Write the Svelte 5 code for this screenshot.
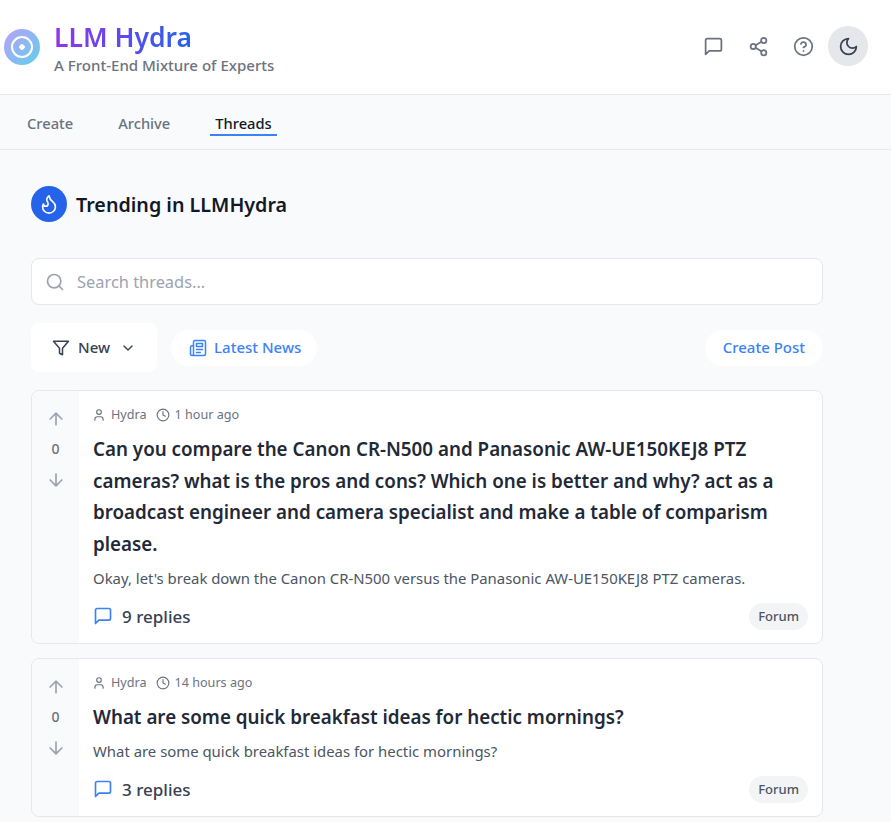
<script>
	const threads = [
		{
			votes: 0,
			author: 'Hydra',
			time: '1 hour ago',
			title: 'Can you compare the Canon CR-N500 and Panasonic AW-UE150KEJ8 PTZ cameras? what is the pros and cons? Which one is better and why? act as a broadcast engineer and camera specialist and make a table of comparism please.',
			excerpt: "Okay, let's break down the Canon CR-N500 versus the Panasonic AW-UE150KEJ8 PTZ cameras.",
			replies: 9
		},
		{
			votes: 0,
			author: 'Hydra',
			time: '14 hours ago',
			title: 'What are some quick breakfast ideas for hectic mornings?',
			excerpt: 'What are some quick breakfast ideas for hectic mornings?',
			replies: 3
		}
	];
</script>

<header class="top">
	<div class="brand">
		<div class="logo"><span class="logo-dot"></span></div>
		<div>
			<h1>LLM Hydra</h1>
			<p class="tagline">A Front-End Mixture of Experts</p>
		</div>
	</div>
	<div class="top-actions">
		<button class="icon-btn" aria-label="Chat">
			<svg viewBox="0 0 24 24" class="i22"><path d="M21 15a2 2 0 0 1-2 2H7l-4 4V5a2 2 0 0 1 2-2h14a2 2 0 0 1 2 2z" /></svg>
		</button>
		<button class="icon-btn" aria-label="Share">
			<svg viewBox="0 0 24 24" class="i22"><circle cx="18" cy="5" r="3" /><circle cx="6" cy="12" r="3" /><circle cx="18" cy="19" r="3" /><path d="m8.59 13.51 6.83 3.98M15.41 6.51l-6.82 3.98" /></svg>
		</button>
		<button class="icon-btn" aria-label="Help">
			<svg viewBox="0 0 24 24" class="i22"><circle cx="12" cy="12" r="10" /><path d="M9.09 9a3 3 0 0 1 5.83 1c0 2-3 3-3 3M12 17h.01" /></svg>
		</button>
		<button class="icon-btn theme" aria-label="Theme">
			<svg viewBox="0 0 24 24" class="i22"><path d="M12 3a6 6 0 0 0 9 9 9 9 0 1 1-9-9Z" /></svg>
		</button>
	</div>
</header>

<nav class="tabs">
	<span class="tab">Create</span>
	<span class="tab">Archive</span>
	<span class="tab active">Threads</span>
</nav>

<main class="page">
	<div class="heading">
		<div class="flame">
			<svg viewBox="0 0 24 24"><path d="M8.5 14.5A2.5 2.5 0 0 0 11 12c0-1.38-.5-2-1-3-1.072-2.143-.224-4.054 2-6 .5 2.5 2 4.9 4 6.5 2 1.6 3 3.5 3 5.500a7 7 0 1 1-14 0c0-1.153.433-2.294 1-3a2.500 2.500 0 0 0 2.500 2.500z" /></svg>
		</div>
		<h2>Trending in LLMHydra</h2>
	</div>

	<div class="search">
		<svg viewBox="0 0 24 24" class="i20"><circle cx="11" cy="11" r="8" /><path d="m21 21-4.300-4.300" /></svg>
		<span>Search threads...</span>
	</div>

	<div class="toolbar">
		<button class="sort">
			<svg viewBox="0 0 24 24" class="i18"><path d="M22 3H2l8 9.460V19l4 2v-8.540L22 3z" /></svg>
			<span>New</span>
			<svg viewBox="0 0 24 24" class="i18 chevron"><path d="m6 9 6 6 6-6" /></svg>
		</button>
		<button class="pill news">
			<svg viewBox="0 0 24 24" class="i18"><path d="M4 22h16a2 2 0 0 0 2-2V4a2 2 0 0 0-2-2H8a2 2 0 0 0-2 2v16a2 2 0 0 1-2 2Zm0 0a2 2 0 0 1-2-2v-9c0-1.100.9-2 2-2h2" /><path d="M18 14h-8M15 18h-5M10 6h8v4h-8z" /></svg>
			<span>Latest News</span>
		</button>
		<button class="pill create"><span>Create Post</span></button>
	</div>

	<div class="list">
		{#each threads as t}
			<article class="card">
				<div class="votes">
					<svg viewBox="0 0 24 24" class="i20"><path d="m5 12 7-7 7 7M12 19V5" /></svg>
					<span>{t.votes}</span>
					<svg viewBox="0 0 24 24" class="i20"><path d="M12 5v14M19 12l-7 7-7-7" /></svg>
				</div>
				<div class="body">
					<div class="meta">
						<svg viewBox="0 0 24 24" class="i14"><path d="M19 21v-2a4 4 0 0 0-4-4H9a4 4 0 0 0-4 4v2" /><circle cx="12" cy="7" r="4" /></svg>
						<span class="author">{t.author}</span>
						<svg viewBox="0 0 24 24" class="i14"><circle cx="12" cy="12" r="10" /><path d="M12 6v6l4 2" /></svg>
						<span>{t.time}</span>
					</div>
					<h3>{t.title}</h3>
					<p class="excerpt">{t.excerpt}</p>
					<div class="foot">
						<div class="replies">
							<svg viewBox="0 0 24 24" class="i20"><path d="M21 15a2 2 0 0 1-2 2H7l-4 4V5a2 2 0 0 1 2-2h14a2 2 0 0 1 2 2z" /></svg>
							<span>{t.replies} replies</span>
						</div>
						<span class="tag">Forum</span>
					</div>
				</div>
			</article>
		{/each}
	</div>
</main>

<style>
	:global(body) {
		background: #f9fafb;
		font-family: "Noto Sans", "Open Sans", sans-serif;
		color: #1f2937;
		height: 822px;
		overflow: hidden;
	}

	svg {
		fill: none;
		stroke: currentColor;
		stroke-width: 2;
		stroke-linecap: round;
		stroke-linejoin: round;
		flex: none;
	}

	.i14 { width: 14px; height: 14px; }
	.i18 { width: 18px; height: 18px; }
	.i20 { width: 20px; height: 20px; }
	.i22 { width: 21px; height: 21px; }

	button {
		font: inherit;
		border: none;
		background: none;
		cursor: pointer;
	}

	.top {
		height: 94px;
		box-sizing: content-box;
		background: #fff;
		border-bottom: 1px solid #e5e7eb;
		display: flex;
		align-items: center;
		justify-content: space-between;
		padding: 0 23px 0 4px;
	}

	.brand {
		display: flex;
		align-items: center;
		gap: 14px;
	}

	.logo {
		width: 36px;
		height: 36px;
		border-radius: 50%;
		background: linear-gradient(135deg, #b9a0f7, #5fd0ee);
		display: flex;
		align-items: center;
		justify-content: center;
	}

	.logo-dot {
		width: 18px;
		height: 18px;
		box-sizing: content-box;
		border-radius: 50%;
		border: 2.500px solid #fff;
		background: radial-gradient(circle, #fff 0 2.500px, transparent 3px);
	}

	h1 {
		margin: -1px 0 1px;
		font-size: 26.500px;
		line-height: 36px;
		font-weight: 600;
		background: linear-gradient(90deg, #9333ea, #2563eb);
		-webkit-background-clip: text;
		background-clip: text;
		color: transparent;
		width: max-content;
	}

	.tagline {
		margin: 0;
		font-size: 15.050px;
		line-height: 19px;
		font-weight: 500;
		color: #6b7280;
	}

	.top-actions {
		display: flex;
		align-items: center;
		gap: 5px;
		margin-top: -2px;
	}

	.icon-btn {
		width: 40px;
		height: 40px;
		padding: 0;
		border-radius: 50%;
		display: flex;
		align-items: center;
		justify-content: center;
		color: #6b7280;
	}

	.theme {
		background: #e5e7eb;
		color: #374151;
	}

	.tabs {
		height: 54px;
		box-sizing: content-box;
		border-bottom: 1px solid #e5e7eb;
		display: flex;
		align-items: center;
		padding: 0 22px;
		gap: 35px;
	}

	.tab {
		padding: 0 5px 1px;
		font-size: 14.700px;
		line-height: 19px;
		font-weight: 500;
		color: #6b7280;
		border-bottom: 2px solid transparent;
		margin-top: 5px;
	}

	.active {
		color: #111827;
		border-bottom-color: #3b82f6;
	}

	.page {
		padding: 36px 68px 0 31px;
	}

	.heading {
		display: flex;
		align-items: center;
		gap: 9px;
	}

	.flame {
		width: 36px;
		height: 36px;
		border-radius: 50%;
		background: #2563eb;
		color: #fff;
		display: flex;
		align-items: center;
		justify-content: center;
	}

	.flame svg {
		width: 22px;
		height: 22px;
		stroke-width: 1.800;
	}

	h2 {
		margin: 0;
		font-size: 19.700px;
		font-weight: 600;
		color: #111827;
	}

	.search {
		margin-top: 36px;
		height: 47px;
		box-sizing: border-box;
		background: #fff;
		border: 1px solid #e5e7eb;
		border-radius: 8px;
		display: flex;
		align-items: center;
		gap: 12px;
		padding: 0 13px;
		color: #9ca3af;
		font-size: 16.400px;
	}

	.toolbar {
		margin-top: 18px;
		display: flex;
		align-items: center;
		gap: 14px;
	}

	.sort {
		height: 49px;
		padding: 0 21px;
		background: #fff;
		border-radius: 8px;
		display: flex;
		align-items: center;
		gap: 8px;
		color: #374151;
		font-size: 15px;
		font-weight: 500;
	}

	.chevron {
		margin-left: 2px;
		width: 16px;
		height: 16px;
	}

	.pill {
		height: 36px;
		padding: 0 18px;
		background: #fff;
		border-radius: 18px;
		display: flex;
		align-items: center;
		gap: 7px;
		color: #3b82f6;
		font-size: 15px;
		font-weight: 500;
	}

	.toolbar span {
		margin-top: -2px;
	}

	.news {
		padding-right: 16px;
	}

	.create {
		margin-left: auto;
	}

	.list {
		margin-top: 18px;
		display: flex;
		flex-direction: column;
		gap: 14px;
	}

	.card {
		display: flex;
		background: #fff;
		border: 1px solid #e5e7eb;
		border-radius: 8px;
		overflow: hidden;
	}

	.votes {
		width: 47px;
		flex: none;
		background: #f9fafb;
		display: flex;
		flex-direction: column;
		align-items: center;
		padding-top: 18px;
		gap: 10px;
		color: #9ca3af;
	}

	.votes span {
		font-size: 14px;
		font-weight: 500;
		line-height: 19px;
		padding-bottom: 2px;
		color: #6b7280;
	}

	.body {
		flex: 1;
		padding: 14px 14px 13px;
	}

	.meta {
		display: flex;
		align-items: center;
		gap: 5px;
		font-size: 12.600px;
		line-height: 20px;
		color: #6b7280;
		margin-left: -1px;
	}

	.author {
		margin-right: 4px;
	}

	h3 {
		margin: 9px 0 0;
		font-size: 18.800px;
		line-height: 31.700px;
		font-weight: 600;
		color: #1f2937;
	}

	.excerpt {
		margin: 7px 0 0;
		font-size: 14.900px;
		line-height: 20px;
		color: #4b5563;
	}

	.foot {
		margin-top: 15px;
		display: flex;
		align-items: center;
		justify-content: space-between;
	}

	.replies {
		display: flex;
		align-items: center;
		gap: 9px;
		font-size: 17px;
		font-weight: 500;
		color: #374151;
	}

	.replies svg {
		color: #3b82f6;
	}

	.tag {
		padding: 0 9px;
		border-radius: 14px;
		background: #f3f4f6;
		font-size: 13px;
		line-height: 27px;
		font-weight: 500;
		color: #4b5563;
	}
</style>
